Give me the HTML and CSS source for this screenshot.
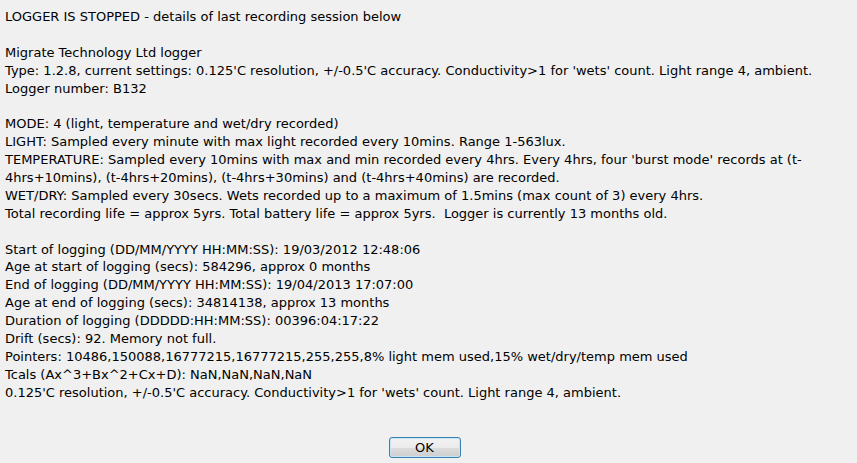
FILE: index.html
```html
<!DOCTYPE html>
<html lang="en">

<head>
    <meta charset="UTF-8">
    <title>Logger details</title>
    <link rel="stylesheet" href="styles.css">
</head>

<body>

    <div class="dialog">
        <div class="details">
            <div class="line">LOGGER IS STOPPED - details of last recording session below</div>
            <div class="line blank"></div>
            <div class="line">Migrate Technology Ltd logger</div>
            <div class="line">Type: 1.2.8, current settings: 0.125'C resolution, +/-0.5'C accuracy. Conductivity&gt;1 for 'wets' count. Light range 4, ambient.</div>
            <div class="line">Logger number: B132</div>
            <div class="line blank"></div>
            <div class="line">MODE: 4 (light, temperature and wet/dry recorded)</div>
            <div class="line">LIGHT: Sampled every minute with max light recorded every 10mins. Range 1-563lux.</div>
            <div class="line">TEMPERATURE: Sampled every 10mins with max and min recorded every 4hrs. Every 4hrs, four 'burst mode' records at (t-</div>
            <div class="line">4hrs+10mins), (t-4hrs+20mins), (t-4hrs+30mins) and (t-4hrs+40mins) are recorded.</div>
            <div class="line">WET/DRY: Sampled every 30secs. Wets recorded up to a maximum of 1.5mins (max count of 3) every 4hrs.</div>
            <div class="line">Total recording life = approx 5yrs. Total battery life = approx 5yrs.&nbsp; Logger is currently 13 months old.</div>
            <div class="line blank"></div>
            <div class="line">Start of logging (DD/MM/YYYY HH:MM:SS): 19/03/2012 12:48:06</div>
            <div class="line">Age at start of logging (secs): 584296, approx 0 months</div>
            <div class="line">End of logging (DD/MM/YYYY HH:MM:SS): 19/04/2013 17:07:00</div>
            <div class="line">Age at end of logging (secs): 34814138, approx 13 months</div>
            <div class="line">Duration of logging (DDDDD:HH:MM:SS): 00396:04:17:22</div>
            <div class="line">Drift (secs): 92. Memory not full.</div>
            <div class="line">Pointers: 10486,150088,16777215,16777215,255,255,8% light mem used,15% wet/dry/temp mem used</div>
            <div class="line">Tcals (Ax^3+Bx^2+Cx+D): NaN,NaN,NaN,NaN</div>
            <div class="line">0.125'C resolution, +/-0.5'C accuracy. Conductivity&gt;1 for 'wets' count. Light range 4, ambient.</div>
        </div>

        <div class="buttons">
            <button type="button" class="ok-button">OK</button>
        </div>
    </div>

</body>

</html>
```

FILE: styles.css
```css
* {
    margin: 0;
    padding: 0;
    box-sizing: border-box;
}

body {
    font-family: "DejaVu Sans", Verdana, sans-serif;
    font-size: 13px;
    background-color: #f0f0f0;
    color: #000000;
    width: 857px;
    height: 463px;
    overflow: hidden;
}

.dialog {
    display: flex;
    flex-direction: column;
    padding: 8px 0 0 5px;
}

.line {
    height: 17.9px;
    line-height: 17.9px;
    white-space: nowrap;
}

.buttons {
    display: flex;
    justify-content: center;
    padding-right: 13px;
    margin-top: 35px;
}

.ok-button {
    width: 72px;
    height: 21px;
    font-family: inherit;
    font-size: 13px;
    color: #000000;
    border: 1px solid #3c7fb1;
    border-radius: 3px;
    background: linear-gradient(to bottom, #f2f2f2 0%, #ebebeb 50%, #dddddd 51%, #cfcfcf 100%);
    box-shadow: inset 0 0 0 1px #c4e5f6;
    cursor: pointer;
}
```
